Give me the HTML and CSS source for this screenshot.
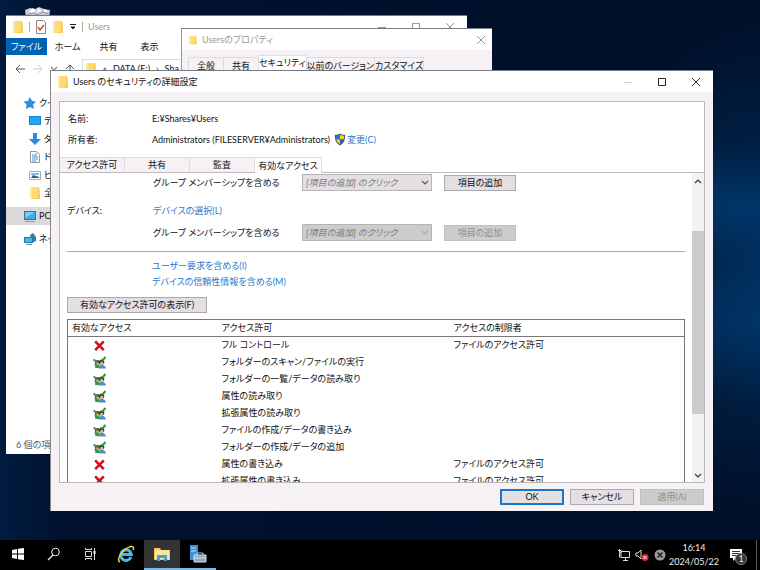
FILE: index.html
```html
<!DOCTYPE html>
<html lang="ja">
<head>
<meta charset="utf-8">
<title>Users のセキュリティの詳細設定</title>
<link rel="stylesheet" href="styles.css">
</head>
<body>
<svg class="sprites" aria-hidden="true">
  <symbol id="folder" viewBox="0 0 12 14"><path d="M1 1h8l2 2v10H1z" fill="#ffdc73"/><path d="M9 1h1v8l1 1v3H1l8-1z" fill="#f3c94f"/><path d="M1 1h2v12H1z" fill="#ffe9a2"/></symbol>
  <symbol id="deny" viewBox="0 0 12 12"><path d="M2 2.200l8 8M10 2.200l-8 8" stroke="#d0101c" stroke-width="2.400" fill="none"/></symbol>
  <symbol id="allow" viewBox="0 0 13 13"><path d="M2 12c0-4 5-4 5-1v1z" fill="#3f9a62"/><path d="M5.500 12.500c0-5 6.500-5 7.500 0z" fill="#4d8fc4"/><circle cx="4.500" cy="6.500" r="2.600" fill="#5b4a34"/><circle cx="8.700" cy="6" r="2.600" fill="#3c3c30"/><circle cx="8.700" cy="7.300" r="1.500" fill="#e0bd98"/><circle cx="4.500" cy="7.800" r="1.500" fill="#cfab84"/><path d="M.500 3.500l3.500 2.500M9 5l3.500-4M2 8l3 3.500" stroke="#2a9c3a" stroke-width="2" fill="none"/></symbol>
  <symbol id="chevron" viewBox="0 0 8 6"><path d="M1 1l3 3 3-3" fill="none" stroke="currentColor" stroke-width="1.200"/></symbol>
  <symbol id="close" viewBox="0 0 10 10"><path d="M1 1l8 8M9 1l-8 8" fill="none" stroke="currentColor"/></symbol>
  <symbol id="maximize" viewBox="0 0 10 10"><path d="M1.500 1.500h7v7h-7z" fill="none" stroke="currentColor"/></symbol>
  <symbol id="minimize" viewBox="0 0 10 10"><path d="M1 5.500h8" fill="none" stroke="currentColor"/></symbol>
</svg>

<main class="desktop">
  <svg class="recycle" viewBox="0 0 28 12" aria-hidden="true"><path d="M1 4l5-2 5 1 4-2 5 2 6 1-1 8H2z" fill="#c9ced6"/><path d="M5 5l4-3 3 3-4 2zM14 2l4 3-5 2zM20 3l4 2-4 2z" fill="#fff"/><path d="M3 9l6-2 4 2 6-3 5 2" stroke="#8b95a3" fill="none"/></svg>

  <section class="window explorer" aria-label="Users">
    <header class="quickbar">
      <svg class="i-folder"><use href="#folder"/></svg>
      <span class="rule"></span>
      <svg class="i-folder" viewBox="0 0 12 14"><path d="M1.500.500h7l2 2v11h-9z" fill="#fff" stroke="#888"/><path d="M3 7l2 3 4-5" stroke="#e0452f" stroke-width="1.500" fill="none"/></svg>
      <svg class="i-folder"><use href="#folder"/></svg>
      <svg class="i-small" viewBox="0 0 8 8"><path d="M1 1.500h6M2 4h4l-2 2z" stroke="#222" fill="#222"/></svg>
      <span class="rule"></span>
      <span class="muted">Users</span>
      <span class="controls faded"><svg><use href="#minimize"/></svg><svg><use href="#maximize"/></svg><svg><use href="#close"/></svg></span>
    </header>
    <nav class="ribbon">
      <button class="file">ファイル</button><button>ホーム</button><button>共有</button><button>表示</button>
    </nav>
    <div class="address">
      <svg class="i-nav" viewBox="0 0 12 12"><path d="M11 6H2M6 2L2 6l4 4" stroke="#555" fill="none"/></svg>
      <svg class="i-nav" viewBox="0 0 12 12"><path d="M1 6h9M6 2l4 4-4 4" stroke="#ccc" fill="none"/></svg>
      <svg class="i-small dim"><use href="#chevron"/></svg>
      <svg class="i-nav" viewBox="0 0 12 12"><path d="M6 11V2M2 6l4-4 4 4" stroke="#555" fill="none"/></svg>
      <div class="path"><svg class="i-folder"><use href="#folder"/></svg><span>«</span><span>DATA (E:)</span><span>›</span><span>Sha</span></div>
    </div>
    <ul class="tree">
      <li><svg viewBox="0 0 14 14"><path d="M7 1l2 4 4 .500-3 3 1 4.500-4-2-4 2 .500-4.500-3-3L5 5z" fill="#2a8fe0"/></svg>クイ</li>
      <li class="sub"><svg viewBox="0 0 14 14"><path d="M1 2h12v9H1z" fill="#1683d8"/><path d="M2 3h10v7H2z" fill="#27a3f2"/></svg>デ</li>
      <li class="sub"><svg viewBox="0 0 14 14"><path d="M5 1h4v6h4l-6 6-6-6h4z" fill="#3289dc"/></svg>ダ</li>
      <li class="sub"><svg viewBox="0 0 14 14"><path d="M2.500 1.500h6l3 3v8h-9z" fill="#fff" stroke="#8a9aa8"/><path d="M4 5h3M4 7h6M4 9h6M4 11h4M8 3v4" stroke="#4a90c8"/></svg>ド</li>
      <li class="sub"><svg viewBox="0 0 14 14"><path d="M1.500 3.500h11v8h-11z" fill="#fff" stroke="#aaa"/><path d="M3 5h8v2H3z" fill="#84bbdf"/><path d="M3 10l2-3 6 2v1z" fill="#2d5f78"/></svg>ビ</li>
      <li class="sub"><svg viewBox="0 0 12 14"><use href="#folder"/></svg>全</li>
      <li class="current"><svg viewBox="0 0 14 14"><path d="M1 2h12v9H1z" fill="#4a6980"/><path d="M2 3h10v7H2z" fill="#3aaee9"/><path d="M2 3h10L2 9z" fill="#75ccf5"/><path d="M2 12.500h10" stroke="#8aa0b0"/></svg>PC</li>
      <li><svg viewBox="0 0 14 14"><path d="M7 3l3-2 3 4v4l-4 2z" fill="#367da8"/><path d="M1 5h9v6H1z" fill="#2178b1"/><path d="M2 6h7v4H2z" fill="#47b6eb"/><path d="M3 12.500h6" stroke="#7995a8"/></svg>ネッ</li>
    </ul>
    <footer class="status">6 個の項</footer>
  </section>

  <section class="window properties" aria-label="Usersのプロパティ">
    <header class="titlebar">
      <svg class="i-tiny"><use href="#folder"/></svg><span class="muted">Usersのプロパティ</span>
      <span class="controls faded"><svg><use href="#close"/></svg></span>
    </header>
    <div class="ptabs"><button>全般</button><button>共有</button><button class="on">セキュリティ</button><button>以前のバージョン</button><button>カスタマイズ</button></div>
  </section>

  <section class="window dialog" aria-label="Users のセキュリティの詳細設定">
    <header class="titlebar">
      <svg class="i-folder"><use href="#folder"/></svg><span>Users のセキュリティの詳細設定</span>
      <span class="controls"><svg class="off"><use href="#minimize"/></svg><svg><use href="#maximize"/></svg><svg><use href="#close"/></svg></span>
    </header>
    <div class="panel">
      <dl class="facts">
        <dt>名前:</dt><dd>E:¥Shares¥Users</dd>
        <dt>所有者:</dt><dd>Administrators (FILESERVER¥Administrators)
          <svg class="shield" viewBox="0 0 12 14"><path d="M6 .500c2 1.500 3.500 1.500 5.500 1.500 0 6-1 9-5.500 11.500C1.500 11 .500 8 .500 2 2.500 2 4 2 6 .500z" fill="#365a80"/><path d="M6 2v5H1.800L1.500 3C3 3 4.500 3 6 2z" fill="#2877c8"/><path d="M6 2v5h4.200l.300-4C9 3 7.500 3 6 2zM6 7v5C3.500 10.500 2.300 9 1.800 7z" fill="#fbce36"/><path d="M6 7v5c2.500-1.500 3.700-3 4.200-5z" fill="#1e64b2"/></svg>
          <a href="#change">変更(C)</a></dd>
      </dl>
      <div class="tabs" role="tablist"><button role="tab">アクセス許可</button><button role="tab">共有</button><button role="tab">監査</button><button role="tab" class="on" aria-selected="true">有効なアクセス</button></div>
      <div class="scroller">
        <div class="content">
          <div class="line">
            <label for="user-group">グループ メンバーシップを含める</label>
            <span class="combo"><select id="user-group"><option>[項目の追加] のクリック</option></select><svg><use href="#chevron"/></svg></span>
            <button class="btn">項目の追加</button>
          </div>
          <div class="line device"><span class="name">デバイス:</span><a href="#device">デバイスの選択(L)</a></div>
          <div class="line">
            <label for="device-group">グループ メンバーシップを含める</label>
            <span class="combo"><select id="device-group" disabled><option>[項目の追加] のクリック</option></select><svg><use href="#chevron"/></svg></span>
            <button class="btn" disabled>項目の追加</button>
          </div>
          <hr>
          <div class="claims"><a href="#user-claims">ユーザー要求を含める(I)</a><a href="#device-claims">デバイスの信頼性情報を含める(M)</a></div>
          <button class="btn show">有効なアクセス許可の表示(F)</button>
          <table>
            <thead><tr><th>有効なアクセス</th><th>アクセス許可</th><th>アクセスの制限者</th></tr></thead>
            <tbody>
              <tr><td><svg><use href="#deny"/></svg></td><td>フル コントロール</td><td>ファイルのアクセス許可</td></tr>
              <tr><td><svg><use href="#allow"/></svg></td><td>フォルダーのスキャン/ファイルの実行</td><td></td></tr>
              <tr><td><svg><use href="#allow"/></svg></td><td>フォルダーの一覧/データの読み取り</td><td></td></tr>
              <tr><td><svg><use href="#allow"/></svg></td><td>属性の読み取り</td><td></td></tr>
              <tr><td><svg><use href="#allow"/></svg></td><td>拡張属性の読み取り</td><td></td></tr>
              <tr><td><svg><use href="#allow"/></svg></td><td>ファイルの作成/データの書き込み</td><td></td></tr>
              <tr><td><svg><use href="#allow"/></svg></td><td>フォルダーの作成/データの追加</td><td></td></tr>
              <tr><td><svg><use href="#deny"/></svg></td><td>属性の書き込み</td><td>ファイルのアクセス許可</td></tr>
              <tr><td><svg><use href="#deny"/></svg></td><td>拡張属性の書き込み</td><td>ファイルのアクセス許可</td></tr>
            </tbody>
          </table>
        </div>
        <div class="scrollbar"><svg class="up"><use href="#chevron"/></svg><div class="track"><div class="thumb"></div></div><svg><use href="#chevron"/></svg></div>
      </div>
    </div>
    <footer class="actions"><button class="btn primary">OK</button><button class="btn">キャンセル</button><button class="btn" disabled>適用(A)</button></footer>
  </section>
</main>

<footer class="taskbar">
  <button aria-label="スタート"><svg viewBox="0 0 14 14"><path d="M1 3l5-1v4.500H1zM7 1.800L13 1v5.500H7zM1 7.500h5V12l-5-1zM7 7.500h6V13l-6-.800z" fill="#fff"/></svg></button>
  <button aria-label="検索"><svg viewBox="0 0 14 14"><circle cx="8.500" cy="5" r="3.800" fill="none" stroke="#eee"/><path d="M6 8l-5 5" stroke="#eee" stroke-width="1.300"/></svg></button>
  <button aria-label="タスク ビュー"><svg viewBox="0 0 14 14"><path d="M2.500 4.500h6v5h-6zM2.500 1v1.500h6V1M2.500 13v-1.500h6V13M11.500 1v12" fill="none" stroke="#ddd"/><path d="M10.500 4h2v3h-2z" fill="#fff"/></svg></button>
  <button aria-label="Internet Explorer"><svg class="app" viewBox="0 0 18 18"><path d="M14 12A5.300 5.300 0 1 1 14.300 9.500H4.500" fill="none" stroke="#43b9ee" stroke-width="3"/><path d="M3 17c-5-2 4-14 11-15.500 3-.500 3 2 2 3.500" fill="none" stroke="#f3cf35" stroke-width="1.500"/></svg></button>
  <button class="active" aria-label="エクスプローラー"><svg class="app" viewBox="0 0 18 18"><path d="M1 3h6l1 2h9v10H1z" fill="#f2c75b"/><path d="M2 5h14v9H2z" fill="#ffe49a"/><path d="M4 10h10v6h-3v-3H7v3H4z" fill="#39a5dc"/></svg></button>
  <button class="open" aria-label="サーバー マネージャー"><svg class="app" viewBox="0 0 18 18"><path d="M1 0h8v15H1z" fill="#3d91d5"/><path d="M2 3h5M2 6h5" stroke="#b8e0fa"/><path d="M8 10V8h6v2" fill="none" stroke="#b9cad8"/><path d="M5 10h12v7H5z" fill="#8ca9bf" stroke="#d2dfe8"/><path d="M5 13h12" stroke="#d2dfe8"/></svg></button>
  <div class="tray">
    <svg viewBox="0 0 14 14"><path d="M4 3.500h8.500v6H4zM6 12.500h5M8.500 10v2M2.500 1v3M1 2.500h3v2H2.500v5" fill="none" stroke="#ddd"/></svg>
    <svg viewBox="0 0 14 14"><path d="M1 5h2l3-3v9L3 8H1z" fill="none" stroke="#ddd"/><circle cx="10" cy="9.500" r="3.500" fill="#d92835"/><path d="M8.500 8l3 3m0-3l-3 3" stroke="#fff"/></svg>
    <svg viewBox="0 0 14 14"><circle cx="7" cy="7" r="5.500" fill="#999"/><path d="M4.500 4.500l5 5m0-5l-5 5" stroke="#222" stroke-width="1.500"/></svg>
    <div class="clock"><time>16:14</time><time>2024/05/22</time></div>
    <div class="notice"><svg viewBox="0 0 14 14"><path d="M1 1h12v9H7l-3 3v-3H1z" fill="#fff"/><path d="M3 3.500h8M3 5.500h8M3 7.500h5" stroke="#333"/></svg><span>1</span></div>
    <span class="peek"></span>
  </div>
</footer>
</body>
</html>
```
FILE: styles.css
```css
* { box-sizing: border-box; }
body {
  margin: 0; height: 100vh; overflow: hidden;
  display: flex; flex-direction: column;
  font: 9px/14px "Lato", "Noto Sans CJK JP", sans-serif;
  font-feature-settings: "palt";
  color: #111;
}
button, select { font: inherit; font-feature-settings: inherit; color: inherit; margin: 0; padding: 0; border: 0; background: none; white-space: nowrap; }
svg { display: block; flex: none; }
a { color: #2878cc; text-decoration: none; }
.sprites { position: absolute; width: 0; height: 0; }

.desktop {
  flex: 1; position: relative; overflow: hidden;
  background:
    radial-gradient(ellipse 140px 60px at 97% 38%, rgba(0, 80, 150, .4) 0%, transparent 100%),
    radial-gradient(ellipse 140px 80px at 100% 60%, rgba(0, 80, 150, .35) 0%, transparent 100%),
    radial-gradient(ellipse 160px 250px at 100% 49%, rgba(0, 56, 110, .7) 0%, transparent 100%),
    linear-gradient(90deg, #001c40 0, #001230 60px, #001029 100%);
}
.recycle { position: absolute; left: 24px; top: 6px; width: 28px; height: 12px; }
.window { position: absolute; background: #fff; border-top: 1px solid #737985; overflow: hidden; }
.explorer { left: 6px; top: 15px; width: 461px; bottom: 86px; display: flex; flex-direction: column; }
.properties { left: 181px; top: 28px; width: 311px; height: 60px; background: #f5f1f5; border-left: 1px solid #999; }
.dialog { left: 50px; right: 47px; top: 70px; bottom: 29px; background: #f5f1f5; border-left: 1px solid #888; display: flex; flex-direction: column; }

.i-folder { width: 12px; height: 14px; }
.i-tiny { width: 10px; height: 10px; }
.i-small { width: 8px; height: 8px; }
.i-nav { width: 12px; height: 12px; }
.dim { color: #888; }
.muted { color: #999; }
.rule { width: 1px; height: 10px; background: #aaa; }
.controls { margin-left: auto; display: flex; gap: 24px; color: #222; }
.controls svg { width: 10px; height: 10px; }
.controls.faded { color: #999; }
.controls .off { color: #ccc; }

.quickbar { height: 22px; flex: none; display: flex; align-items: center; gap: 5px; padding: 0 12px 0 6px; }
.ribbon { height: 17px; flex: none; display: flex; }
.ribbon button { width: 41px; }
.ribbon .file { background: #0063b1; color: #fff; }
.address { height: 27px; flex: none; display: flex; align-items: center; gap: 6px; padding-left: 8px; }
.path { flex: 1; height: 20px; display: flex; align-items: center; gap: 6px; padding-left: 2px; border: 1px solid #ddd; }
.tree { list-style: none; margin: 12px 0 0; padding: 0; }
.tree li { height: 18px; display: flex; align-items: center; gap: 2px; padding-left: 17px; white-space: nowrap; }
.tree svg { width: 14px; height: 14px; }
.tree .sub { padding-left: 22px; }
.tree .current { background: #dadada; margin: 5px 0; }
.status { margin-top: auto; padding: 0 0 2px 10px; color: #48617c; }

.titlebar { height: 21px; flex: none; display: flex; align-items: center; gap: 4px; padding: 0 12px 0 6px; background: #fff; }
.properties .titlebar { padding-right: 6px; }
.ptabs { display: flex; align-items: end; height: 22px; margin: 3px 6px; }
.ptabs button { height: 18px; border: 1px solid #ddd; border-right: 0; min-width: 35px; }
.ptabs .on { height: 20px; background: #fff; line-height: 12px; padding-bottom: 4px; }
.ptabs button:last-child { border-right: 1px solid #ddd; }

.panel { flex: 1; min-height: 0; margin: 9px 8px 0; display: flex; flex-direction: column; background: #fff; border: 1px solid #b8b8b8; }
.facts { margin: 6px 0 0 8px; display: grid; grid-template-columns: 84px 1fr; grid-auto-rows: 21px; align-items: center; }
.facts dd { margin: 0; display: flex; align-items: center; white-space: nowrap; }
.shield { width: 12px; height: 13px; margin: 0 1px 0 4px; }
.tabs { display: flex; height: 16px; margin-top: 7px; border-bottom: 1px solid #bbb; flex: none; }
.tabs button { width: 65px; height: 15px; background: #f5f1f5; border: 1px solid #ddd; border-width: 1px 1px 0 0; line-height: 14px; }
.tabs .on { width: 67px; height: 16px; background: #fff; }
.scroller { flex: 1; min-height: 0; display: flex; }
.content { flex: 1; min-width: 0; overflow: hidden; padding: 1px 7px 0; }
.line { display: flex; align-items: center; height: 17px; padding-left: 86px; }
.line label { width: 149px; white-space: nowrap; }
.device { margin: 11px 0 5px; height: 17px; padding-left: 0; }
.device .name { width: 86px; }
.combo { position: relative; width: 130px; height: 17px; margin-right: 12px; }
.combo select { appearance: none; width: 100%; height: 100%; padding: 0 3px; background: #e3dfe3; border: 1px solid #b5b5b5; border-radius: 0; font-style: italic; color: #777; display: block; opacity: 1; }
.combo svg { position: absolute; right: 3px; top: 6px; width: 8px; height: 6px; color: #555; }
.combo select:disabled { background: #ccc; }
.combo select:disabled + svg { color: #aaa; }
.btn { width: 72px; height: 16px; line-height: 14px; background: #e3dfe3; border: 1px solid #aaa; }
.btn:disabled { background: #ccc; border-color: #c0c0c0; color: #909090; }
hr { margin: 10px 0 6px; border: 0; border-top: 1px solid #aaa; }
.claims { display: flex; flex-direction: column; align-items: start; padding-left: 85px; line-height: 16px; }
.show { display: block; width: 140px; margin: 7px 0 6px; }
table { width: 100%; border-collapse: collapse; table-layout: fixed; border: 1px solid #777; }
th, td { height: 17px; padding: 0; font-weight: normal; text-align: left; white-space: nowrap; line-height: 16px; }
th { border-bottom: 1px solid #777; }
th:first-child { width: 154px; padding-left: 4px; }
th:nth-child(2) { width: 232px; }
td svg { width: 13px; height: 13px; margin-left: 25px; }
.scrollbar { width: 12px; display: flex; flex-direction: column; align-items: center; padding: 5px 0 3px; background: #f3f1f3; }
.scrollbar svg { width: 8px; height: 6px; color: #333; }
.scrollbar .up { transform: rotate(180deg); }
.track { flex: 1; width: 100%; padding: 47px 0 59px; }
.thumb { height: 100%; background: #cbcbcb; }
.actions { flex: none; height: 28px; padding: 6px 9px 0; display: flex; justify-content: flex-end; gap: 6px; }
.actions .btn { width: 64px; }
.actions .primary { border: 2px solid #1976c9; line-height: 12px; }

.taskbar { height: 30px; flex: none; display: flex; background: #000; color: #eee; }
.taskbar button { width: 36px; display: flex; align-items: center; justify-content: center; border-bottom: 2px solid transparent; }
.taskbar svg { width: 14px; height: 14px; }
.taskbar .app { width: 18px; height: 18px; }
.taskbar .active { background: #333; border-color: #76b9ed; }
.taskbar .open { border-color: #76b9ed; }
.tray { margin-left: auto; display: flex; align-items: center; gap: 4px; padding-right: 3px; }
.clock { display: flex; flex-direction: column; align-items: center; width: 46px; }
.notice { position: relative; margin: 0 9px 0 8px; }
.notice span { position: absolute; left: 6px; top: 5px; width: 12px; height: 12px; border-radius: 6px; border: 1px solid #888; background: #333; line-height: 10px; text-align: center; }
.peek { width: 1px; height: 100%; background: #555; }
```
